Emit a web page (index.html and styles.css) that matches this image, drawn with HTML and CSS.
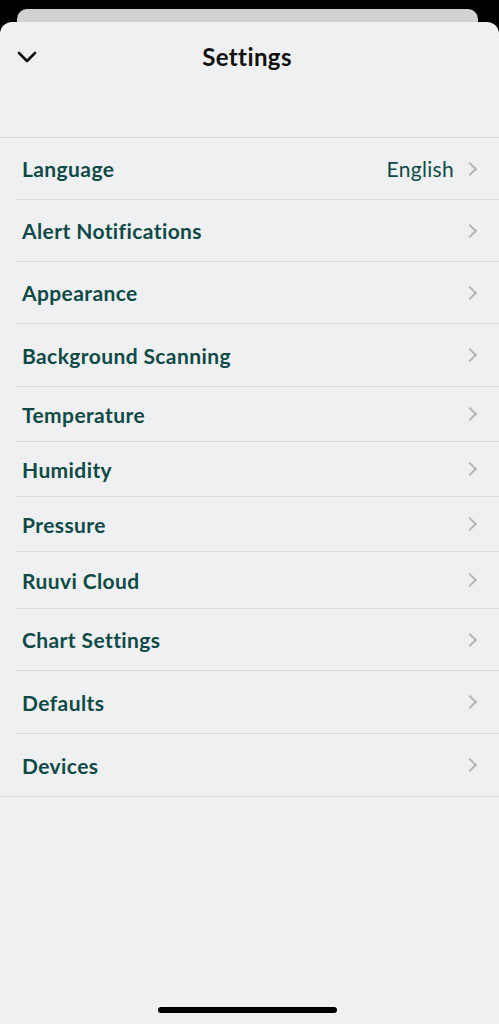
FILE: index.html
```html
<!DOCTYPE html>
<html lang="en">

<head>
    <meta charset="UTF-8">
    <title>Settings</title>

    <link rel="stylesheet" href="styles.css">
</head>

<body>
    <div id="screen">
        <div id="back-card"></div>
        <div id="sheet">
            <div id="header">
                <span class="close">
                    <svg width="20" height="12" viewBox="0 0 20 12">
                        <path d="M2 2 L10 10 L18 2" fill="none" stroke="#111" stroke-width="2.6" stroke-linecap="round" stroke-linejoin="round" />
                    </svg>
                </span>
                <h1>Settings</h1>
            </div>
            <div id="list">
                <div class="row">
                    <span class="label">Language</span>
                    <span class="value">English</span>
                    <span class="chevron"></span>
                </div>
                <div class="row">
                    <span class="label">Alert Notifications</span>
                    <span class="chevron"></span>
                </div>
                <div class="row">
                    <span class="label">Appearance</span>
                    <span class="chevron"></span>
                </div>
                <div class="row tall">
                    <span class="label">Background Scanning</span>
                    <span class="chevron"></span>
                </div>
                <div class="row short">
                    <span class="label">Temperature</span>
                    <span class="chevron"></span>
                </div>
                <div class="row short">
                    <span class="label">Humidity</span>
                    <span class="chevron"></span>
                </div>
                <div class="row short">
                    <span class="label">Pressure</span>
                    <span class="chevron"></span>
                </div>
                <div class="row mid">
                    <span class="label">Ruuvi Cloud</span>
                    <span class="chevron"></span>
                </div>
                <div class="row">
                    <span class="label">Chart Settings</span>
                    <span class="chevron"></span>
                </div>
                <div class="row tall">
                    <span class="label">Defaults</span>
                    <span class="chevron"></span>
                </div>
                <div class="row last">
                    <span class="label">Devices</span>
                    <span class="chevron"></span>
                </div>
            </div>
            <div id="home-bar"></div>
        </div>
    </div>
</body>

</html>
```

FILE: styles.css
```css
body,
html {
    width: 100%;
    height: 100%;
    margin: 0;
    padding: 0;
    overflow: hidden;
    background: #000;
}

#screen {
    font-family: 'Lato', 'Noto Sans', sans-serif;
    height: 100%;
    display: flex;
    flex-direction: column;
    padding-top: 9px;
    box-sizing: border-box;
}

#back-card {
    height: 20px;
    margin: 0 21px 0 17px;
    background: #d2d2d3;
    border-radius: 10px 10px 0 0;
    flex-shrink: 0;
}

#sheet {
    flex: 1;
    margin-top: -7px;
    background: #eff0f2;
    border-radius: 12px 12px 0 0;
    display: flex;
    flex-direction: column;
}

#header {
    height: 115px;
    border-bottom: 1px solid #d8d9db;
    display: flex;
    align-items: flex-start;
    justify-content: center;
    position: relative;
}

#header h1 {
    margin: 21px 0 0 -5px;
    font-size: 24px;
    font-weight: 700;
    letter-spacing: 0.4px;
    color: #111;
    line-height: 28px;
}

.close {
    position: absolute;
    left: 17px;
    top: 29px;
    display: flex;
}

#list {
    border-bottom: 1px solid #d8d9db;
}

.row {
    height: 62px;
    box-sizing: border-box;
    margin-left: 16px;
    padding: 0 21px 0 6px;
    border-bottom: 1px solid #d8d9db;
    display: flex;
    align-items: center;
    color: #0f4a46;
}

.row.tall {
    height: 63px;
}

.row.short {
    height: 55px;
}

.row.mid {
    height: 57px;
}

.row.last {
    border-bottom: none;
}

.label {
    flex: 1;
    font-size: 21px;
    font-weight: 700;
    letter-spacing: 0.4px;
}

.value {
    font-size: 21px;
    letter-spacing: 0.3px;
    margin-right: 11px;
}

.chevron {
    width: 8px;
    height: 8px;
    border-top: 2px solid #b3b4b6;
    border-right: 2px solid #b3b4b6;
    transform: rotate(45deg);
    margin-right: 3px;
}

#home-bar {
    margin: auto 4px 11px 0;
    align-self: center;
    width: 179px;
    height: 6px;
    border-radius: 3px;
    background: #000;
}
```
